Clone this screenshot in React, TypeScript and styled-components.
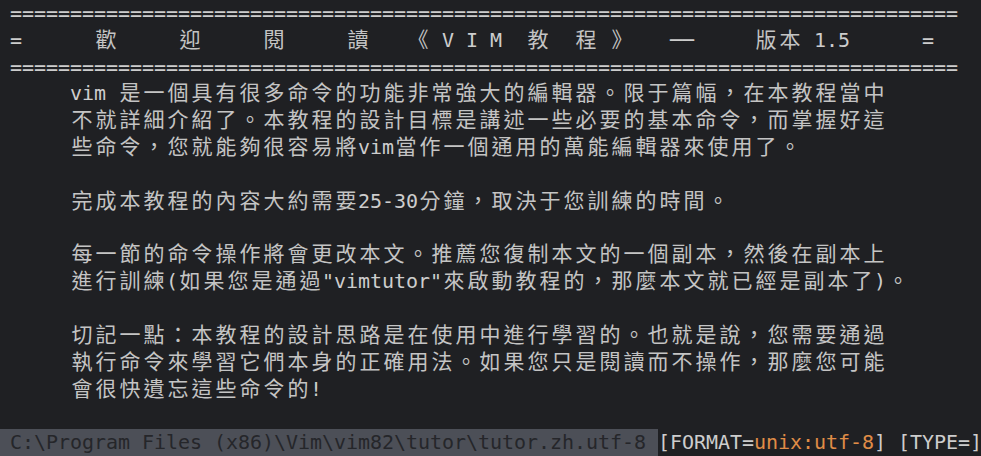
import React from "react";
import styled, { createGlobalStyle } from "styled-components";

const Colors = {
  background: "#1f2023",
  text: "#cdcdcd",
  wideText: "#c4c4c4",
  statusBg: "#4c4f57",
  statusText: "#25262a",
  accent: "#e08d47",
};

const CELL = 12;

const GlobalStyle = createGlobalStyle`
  html, body {
    margin: 0;
    padding: 0;
    background: ${Colors.background};
  }
`;

const Screen = styled.div`
  display: grid;
  grid-template-rows: repeat(17, minmax(0, 1fr));
  height: 456px;
  width: 981px;
  overflow: hidden;
  background: ${Colors.background};
  color: ${Colors.text};
  font-family: "DejaVu Sans Mono", "Liberation Mono", monospace;
  font-size: 20px;
`;

const Line = styled.div`
  white-space: pre;
  line-height: 26.8px;
  padding-left: 10px;
`;

const StatusLine = styled.div`
  display: flex;
  white-space: pre;
  line-height: 26.8px;
`;

const FilePath = styled.div`
  background: ${Colors.statusBg};
  color: ${Colors.statusText};
  padding-left: 10px;
`;

const StatusInfo = styled.span<{ $accent?: boolean }>`
  color: ${(p) => (p.$accent ? Colors.accent : Colors.text)};
`;

const Cell = styled.span<{ $wide?: boolean }>`
  display: inline-block;
  width: ${(p) => (p.$wide ? CELL * 2 : CELL)}px;
  text-align: center;
  line-height: ${(p) => (p.$wide ? "22px" : "inherit")};
  color: ${(p) => (p.$wide ? Colors.wideText : "inherit")};
  font-family: ${(p) =>
    p.$wide
      ? '"Noto Sans CJK TC", "Noto Sans CJK SC", sans-serif'
      : '"DejaVu Sans Mono", "Liberation Mono", monospace'};
  font-size: ${(p) => (p.$wide ? "21px" : "20px")};
`;

const isWide = (ch: string) => {
  const code = ch.codePointAt(0) || 0;
  return code >= 0x2e80;
};

const Cells: React.FC<{ text: string }> = ({ text }) => (
  <>
    {Array.from(text).map((ch, i) => (
      <Cell key={i} $wide={isWide(ch)}>
        {ch}
      </Cell>
    ))}
  </>
);

const rule = "=".repeat(79);
const title =
  "=" + "      " + "歡" + "     " + "迎" + "     " + "閱" + "     " + "讀" +
  "   " + "《" + " V I M  " + "教" + "  " + "程" + " " + "》" + "   " +
  "──" + "     " + "版本 1.5" + "      " + "=";

const lines = [
  rule,
  title,
  rule,
  "     vim 是一個具有很多命令的功能非常強大的編輯器。限于篇幅，在本教程當中",
  "     不就詳細介紹了。本教程的設計目標是講述一些必要的基本命令，而掌握好這",
  "     些命令，您就能夠很容易將vim當作一個通用的萬能編輯器來使用了。",
  "",
  "     完成本教程的內容大約需要25-30分鐘，取決于您訓練的時間。",
  "",
  "     每一節的命令操作將會更改本文。推薦您復制本文的一個副本，然後在副本上",
  "     進行訓練(如果您是通過\"vimtutor\"來啟動教程的，那麼本文就已經是副本了)。",
  "",
  "     切記一點：本教程的設計思路是在使用中進行學習的。也就是說，您需要通過",
  "     執行命令來學習它們本身的正確用法。如果您只是閱讀而不操作，那麼您可能",
  "     會很快遺忘這些命令的!",
  "",
];

const App: React.FC = () => {
  return (
    <>
      <GlobalStyle />
      <Screen>
        {lines.map((text, i) => (
          <Line key={i}>
            <Cells text={text} />
          </Line>
        ))}
        <StatusLine>
          <FilePath>
            <Cells text="C:\Program Files (x86)\Vim\vim82\tutor\tutor.zh.utf-8 " />
          </FilePath>
          <StatusInfo>
            <Cells text="[FORMAT=" />
          </StatusInfo>
          <StatusInfo $accent>
            <Cells text="unix:utf-8" />
          </StatusInfo>
          <StatusInfo>
            <Cells text="] [TYPE=]" />
          </StatusInfo>
        </StatusLine>
      </Screen>
    </>
  );
};

export default App;
